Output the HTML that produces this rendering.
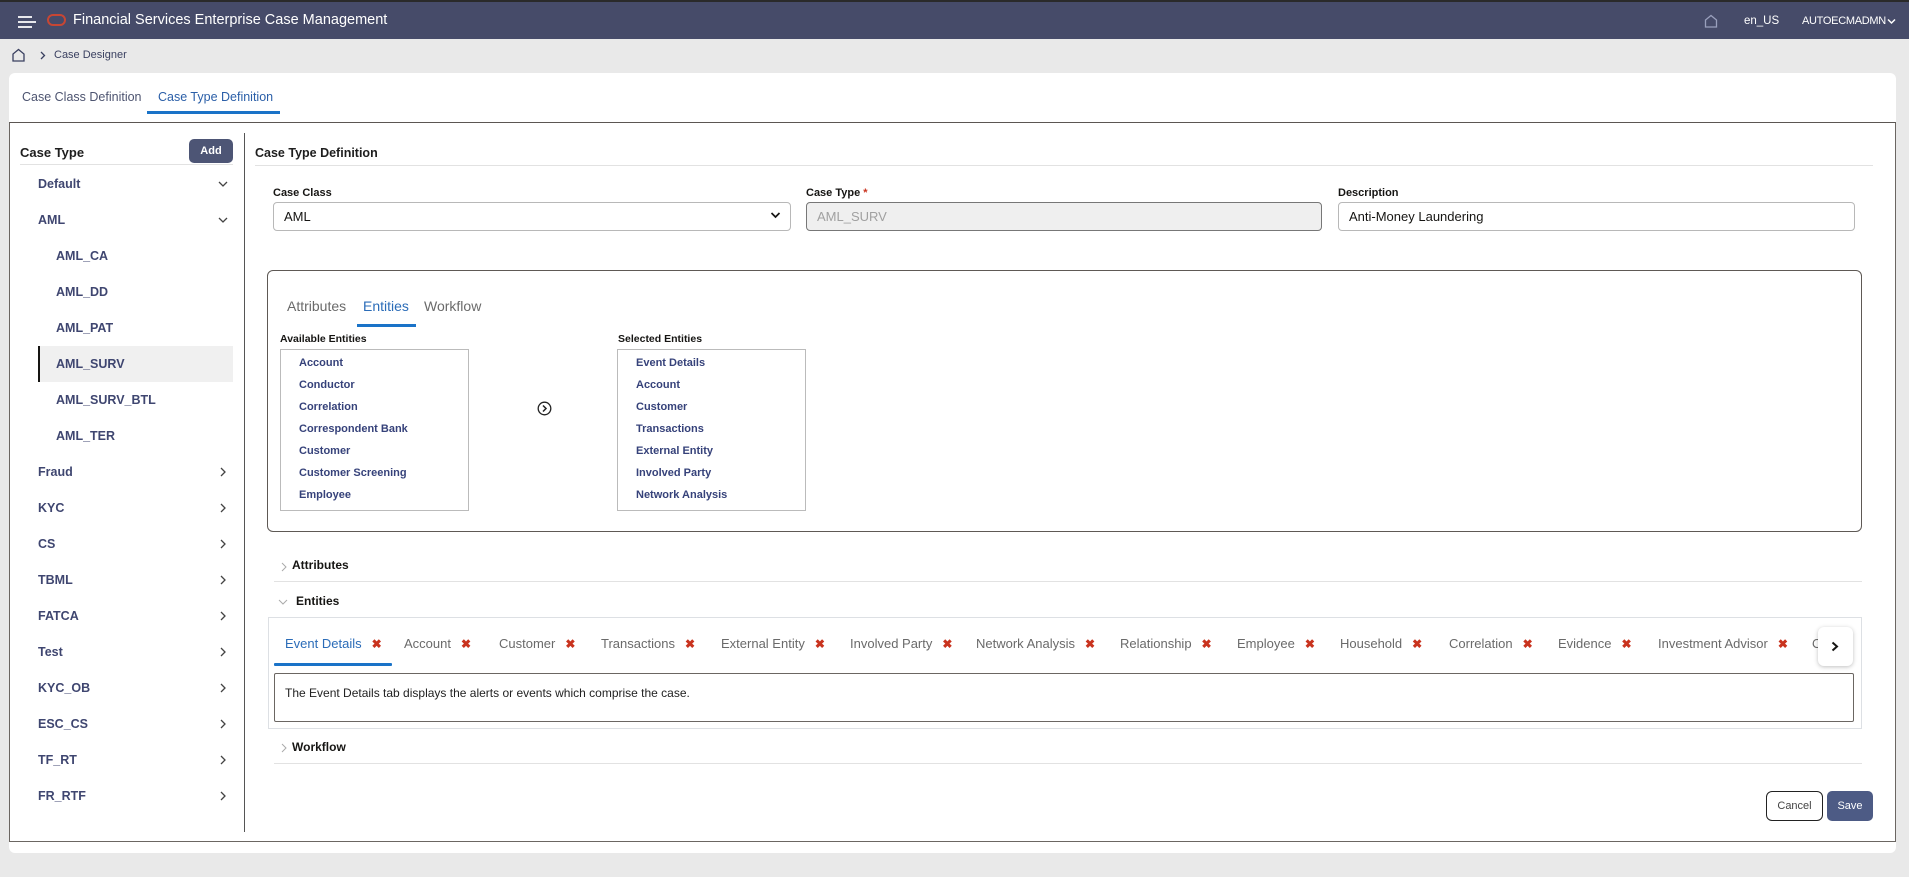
<!DOCTYPE html>
<html><head><meta charset="utf-8"><style>
*{box-sizing:border-box;margin:0;padding:0}
body{width:1909px;height:877px;background:#e9e9e9;font-family:"Liberation Sans",sans-serif;position:relative;overflow:hidden;color:#161513}
.a{position:absolute;white-space:nowrap}
.hdr{left:0;top:0;width:1909px;height:39px;background:#464b69;border-top:2px solid #2a2a2a}
.card{left:9px;top:73px;width:1887px;height:780px;background:#fff;border-radius:6px}
.inner{left:9px;top:122px;width:1887px;height:720px;border:1px solid #6b6662;border-top-color:#5b5652}
.li{left:38px;font-size:12.5px;font-weight:bold;color:#3f4670;transform:translateY(-50%)}
.ch{left:38px;font-size:12.5px;font-weight:bold;color:#3f4670;transform:translateY(-50%);padding-left:18px}
.chev{left:216px;width:14px;height:14px;transform:translateY(-50%)}
.ent{font-size:11px;color:#36427a;font-weight:bold;left:0}
.tab{font-size:13px;color:#6a6a6a;top:636px}
.x{color:#c9331e;font-weight:bold;font-size:12px;margin-left:10px}
.lbl{font-size:11px;font-weight:bold;color:#161513}
.inp{height:29px;border:1px solid #b8b8b8;border-radius:4px;font-size:13px;padding:6px 10px}
</style></head><body>
<div class="a hdr">
 <svg class="a" style="left:17px;top:14px" width="20" height="12"><path d="M1 1H15M1 6H19M1 11H15" stroke="#fff" stroke-width="1.7"/></svg>
 <div class="a" style="left:47px;top:12px;width:19px;height:12px;border:2.6px solid #c74634;border-radius:6px"></div>
 <div class="a" style="left:73px;top:10px;color:#fff;font-size:14.5px">Financial Services Enterprise Case Management</div>
 <svg class="a" style="left:1704px;top:12px" width="14" height="14"><path d="M1.5 13V6L7 1.5 12.5 6V13Z" fill="none" stroke="#9aa0bd" stroke-width="1.3"/></svg>
 <div class="a" style="left:1744px;top:13px;color:#fff;font-size:11.5px">en_US</div>
 <div class="a" style="left:1802px;top:13px;color:#fff;font-size:11px;letter-spacing:-0.3px">AUTOECMADMN</div>
 <svg class="a" style="left:1887px;top:16px" width="9" height="7"><path d="M1 1.5L4.5 5 8 1.5" fill="none" stroke="#fff" stroke-width="1.5"/></svg>
</div>
<svg class="a" style="left:11px;top:48px" width="15" height="14"><path d="M2 13V6L7.5 1.5 13 6V13Z" fill="none" stroke="#3a4060" stroke-width="1.3"/></svg>
<svg class="a" style="left:40px;top:51px" width="6" height="9"><path d="M1 1L4.5 4.5 1 8" fill="none" stroke="#3a4060" stroke-width="1.3"/></svg>
<div class="a" style="left:54px;top:49px;font-size:11px;color:#3a4060">Case Designer</div>
<div class="a card"></div>
<div class="a" style="left:22px;top:90px;font-size:12.5px;color:#4d5470">Case Class Definition</div>
<div class="a" style="left:158px;top:90px;font-size:12.5px;color:#2b5fa8">Case Type Definition</div>
<div class="a" style="left:147px;top:111px;width:133px;height:3px;background:#1a73c8"></div>
<div class="a inner"></div>
<div class="a" style="left:244px;top:133px;width:1px;height:699px;background:#555"></div>
<!-- left panel -->
<div class="a" style="left:20px;top:145px;font-size:13px;font-weight:bold;color:#1e1e1e">Case Type</div>
<div class="a" style="left:189px;top:139px;width:44px;height:24px;background:#4d5575;border-radius:5px;color:#fff;font-size:11px;font-weight:bold;text-align:center;line-height:24px">Add</div>
<div class="a" style="left:20px;top:164px;width:213px;height:1px;background:#e2e2e2"></div>
<div class="a" style="left:38px;top:346px;width:195px;height:36px;background:#f0f0f0;border-left:2px solid #161513"></div>
<div class="a li" style="top:184px">Default</div>
<div class="a li" style="top:220px">AML</div>
<div class="a ch" style="top:256px">AML_CA</div>
<div class="a ch" style="top:292px">AML_DD</div>
<div class="a ch" style="top:328px">AML_PAT</div>
<div class="a ch" style="top:364px">AML_SURV</div>
<div class="a ch" style="top:400px">AML_SURV_BTL</div>
<div class="a ch" style="top:436px">AML_TER</div>
<svg class="a chev" style="top:184px" viewBox="0 0 14 14"><path d="M3 5L7 9 11 5" fill="none" stroke="#444" stroke-width="1.3"/></svg>
<svg class="a chev" style="top:220px" viewBox="0 0 14 14"><path d="M3 5L7 9 11 5" fill="none" stroke="#444" stroke-width="1.3"/></svg>
<div class="a li" style="top:472px">Fraud</div>
<div class="a li" style="top:508px">KYC</div>
<div class="a li" style="top:544px">CS</div>
<div class="a li" style="top:580px">TBML</div>
<div class="a li" style="top:616px">FATCA</div>
<div class="a li" style="top:652px">Test</div>
<div class="a li" style="top:688px">KYC_OB</div>
<div class="a li" style="top:724px">ESC_CS</div>
<div class="a li" style="top:760px">TF_RT</div>
<div class="a li" style="top:796px">FR_RTF</div>
<svg class="a" style="left:216px;top:465px" width="14" height="340"><g fill="none" stroke="#444" stroke-width="1.3"><path d="M5 3L9 7 5 11"/><path d="M5 39L9 43 5 47"/><path d="M5 75L9 79 5 83"/><path d="M5 111L9 115 5 119"/><path d="M5 147L9 151 5 155"/><path d="M5 183L9 187 5 191"/><path d="M5 219L9 223 5 227"/><path d="M5 255L9 259 5 263"/><path d="M5 291L9 295 5 299"/><path d="M5 327L9 331 5 335"/></g></svg>
<!-- right -->
<div class="a" style="left:255px;top:146px;font-size:12.5px;font-weight:bold;color:#1e1e1e">Case Type Definition</div>
<div class="a" style="left:255px;top:165px;width:1618px;height:1px;background:#e2e2e2"></div>
<div class="a lbl" style="left:273px;top:187px">Case Class</div>
<div class="a lbl" style="left:806px;top:187px">Case Type <span style="color:#c9331e">*</span></div>
<div class="a lbl" style="left:1338px;top:187px">Description</div>
<div class="a inp" style="left:273px;top:202px;width:518px">AML</div>
<svg class="a" style="left:770px;top:211px" width="11" height="9"><path d="M1.5 2L5.5 6 9.5 2" fill="none" stroke="#161513" stroke-width="1.7"/></svg>
<div class="a inp" style="left:806px;top:202px;width:516px;background:#efefef;color:#a0a0a0;border-color:#777">AML_SURV</div>
<div class="a inp" style="left:1338px;top:202px;width:517px">Anti-Money Laundering</div>
<div class="a" style="left:267px;top:270px;width:1595px;height:262px;border:1px solid #5e5955;border-radius:6px"></div>
<div class="a" style="left:287px;top:298px;font-size:14px;color:#6a6a6a">Attributes</div>
<div class="a" style="left:363px;top:298px;font-size:14px;color:#2b6cb8">Entities</div>
<div class="a" style="left:424px;top:298px;font-size:14px;color:#6a6a6a">Workflow</div>
<div class="a" style="left:357px;top:324px;width:59px;height:3px;background:#1a73c8"></div>
<div class="a lbl" style="left:280px;top:333px;font-size:10.5px">Available Entities</div>
<div class="a lbl" style="left:618px;top:333px;font-size:10.5px">Selected Entities</div>
<div class="a" style="left:280px;top:349px;width:189px;height:162px;border:1px solid #bbb;overflow:hidden">
 <div class="a" style="left:0;top:0;width:187px;height:152px;overflow:hidden">
 <div class="a ent" style="left:18px;top:2px;line-height:22px">Account<br>Conductor<br>Correlation<br>Correspondent Bank<br>Customer<br>Customer Screening<br>Employee</div>
 </div>
</div>
<div class="a" style="left:617px;top:349px;width:189px;height:162px;border:1px solid #bbb;overflow:hidden">
 <div class="a ent" style="left:18px;top:2px;line-height:22px">Event Details<br>Account<br>Customer<br>Transactions<br>External Entity<br>Involved Party<br>Network Analysis</div>
</div>
<svg class="a" style="left:537px;top:401px" width="15" height="15"><circle cx="7.5" cy="7.5" r="6.3" fill="none" stroke="#222" stroke-width="1.3"/><path d="M6 4.5L9 7.5 6 10.5" fill="none" stroke="#222" stroke-width="1.5"/></svg>
<svg class="a" style="left:280px;top:562px" width="8" height="10"><path d="M2 1L6 5 2 9" fill="none" stroke="#aaa" stroke-width="1"/></svg>
<div class="a" style="left:292px;top:558px;font-size:12px;font-weight:bold">Attributes</div>
<div class="a" style="left:274px;top:581px;width:1588px;height:1px;background:#e2e2e2"></div>
<svg class="a" style="left:278px;top:598px" width="10" height="8"><path d="M1 2L5 6 9 2" fill="none" stroke="#aaa" stroke-width="1"/></svg>
<div class="a" style="left:296px;top:594px;font-size:12px;font-weight:bold">Entities</div>
<div class="a" style="left:268px;top:617px;width:1594px;height:112px;border:1px solid #dde0e4"></div>
<div class="a tab" style="left:285px;color:#2b6cb8">Event Details<span class="x">✖</span></div>
<div class="a tab" style="left:404px">Account<span class="x">✖</span></div>
<div class="a tab" style="left:499px">Customer<span class="x">✖</span></div>
<div class="a tab" style="left:601px">Transactions<span class="x">✖</span></div>
<div class="a tab" style="left:721px">External Entity<span class="x">✖</span></div>
<div class="a tab" style="left:850px">Involved Party<span class="x">✖</span></div>
<div class="a tab" style="left:976px">Network Analysis<span class="x">✖</span></div>
<div class="a tab" style="left:1120px">Relationship<span class="x">✖</span></div>
<div class="a tab" style="left:1237px">Employee<span class="x">✖</span></div>
<div class="a tab" style="left:1340px">Household<span class="x">✖</span></div>
<div class="a tab" style="left:1449px">Correlation<span class="x">✖</span></div>
<div class="a tab" style="left:1558px">Evidence<span class="x">✖</span></div>
<div class="a tab" style="left:1658px">Investment Advisor<span class="x">✖</span></div>
<div class="a tab" style="left:1812px">O</div>
<div class="a" style="left:1818px;top:627px;width:35px;height:39px;background:#fff;border-radius:6px;box-shadow:0 1px 4px rgba(0,0,0,.25)"></div>
<svg class="a" style="left:1831px;top:641px" width="8" height="11"><path d="M1.5 1.5L6 5.5 1.5 9.5" fill="none" stroke="#161513" stroke-width="2"/></svg>
<div class="a" style="left:274px;top:663px;width:118px;height:3px;background:#1a73c8;border-radius:1px"></div>
<div class="a" style="left:274px;top:673px;width:1580px;height:49px;border:1px solid #6b6662;border-radius:2px"></div>
<div class="a" style="left:285px;top:686px;font-size:12px;color:#222">The Event Details tab displays the alerts or events which comprise the case.</div>
<svg class="a" style="left:280px;top:743px" width="8" height="10"><path d="M2 1L6 5 2 9" fill="none" stroke="#aaa" stroke-width="1"/></svg>
<div class="a" style="left:292px;top:740px;font-size:12px;font-weight:bold">Workflow</div>
<div class="a" style="left:274px;top:763px;width:1588px;height:1px;background:#e2e2e2"></div>
<div class="a" style="left:1766px;top:791px;width:57px;height:30px;border:1.3px solid #222;border-radius:6px;font-size:11px;color:#444;text-align:center;line-height:28px">Cancel</div>
<div class="a" style="left:1827px;top:791px;width:46px;height:30px;background:#4d5b85;border-radius:5px;font-size:11px;color:#fff;text-align:center;line-height:30px">Save</div>
</body></html>
